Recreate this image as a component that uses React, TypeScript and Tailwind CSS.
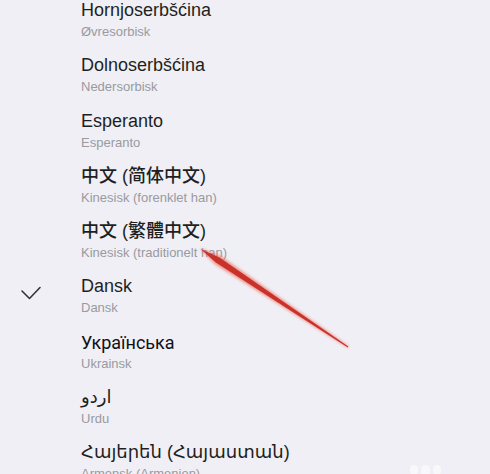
import React from "react";

const items: { title: string; sub: string; checked?: boolean; cls?: string }[] = [
  { title: "Hornjoserbšćina", sub: "Øvresorbisk" },
  { title: "Dolnoserbšćina", sub: "Nedersorbisk" },
  { title: "Esperanto", sub: "Esperanto" },
  { title: "中文 (简体中文)", sub: "Kinesisk (forenklet han)", cls: "font-medium" },
  { title: "中文 (繁體中文)", sub: "Kinesisk (traditionelt han)", cls: "font-medium" },
  { title: "Dansk", sub: "Dansk", checked: true },
  { title: "Українська", sub: "Ukrainsk", cls: "font-['Roboto'] text-[#111114]" },
  { title: "اردو", sub: "Urdu" },
  { title: "Հայերեն (Հայաստան)", sub: "Armensk (Armenien)" },
];

export default function App() {
  return (
    <div
      className="relative w-[490px] h-[474px] overflow-hidden bg-[#efeff5]"
      style={{ fontFamily: '"Liberation Sans", "Noto Sans CJK SC", "DejaVu Sans", sans-serif' }}
    >
      <div className="flex flex-col mt-[-8px]">
        {items.map((it, i) => (
          <div key={i} className="flex h-[55.25px] shrink-0 items-start pt-[6px]">
            <div className="w-[81px] shrink-0 flex justify-start pl-[20px] pt-[12px]">
              {it.checked && (
                <svg width="22" height="16" viewBox="0 0 22 16">
                  <path d="M2 5 L9.5 12.5 L20 1.5" fill="none" stroke="#333338" strokeWidth="1.6" strokeLinecap="round" strokeLinejoin="round" />
                </svg>
              )}
            </div>
            <div className="flex flex-col">
              <div className={`text-[18px] leading-[25px] text-[#1f1f22] whitespace-nowrap ${it.cls ?? ""}`}>{it.title}</div>
              <div className="text-[13px] leading-[18px] text-[#9a9aa0] whitespace-nowrap">{it.sub}</div>
            </div>
          </div>
        ))}
      </div>
      <svg className="absolute inset-0 pointer-events-none" width="490" height="474" viewBox="0 0 490 474">
        <defs>
          <filter id="b" x="-20%" y="-20%" width="140%" height="140%">
            <feGaussianBlur stdDeviation="1.6" />
          </filter>
        </defs>
        <polygon
          points="200,248.5 214.8,264 348,347.8 348.6,346.2 220.8,256.2"
          fill="#f06a5a"
          opacity="0.75"
          filter="url(#b)"
        />
        <polygon
          points="200.5,249 215.9,262.6 347.8,347.4 348.3,346.5 219.4,257.4"
          fill="#c8322a"
        />
      </svg>
      <div className="absolute left-[410px] top-[465px] flex gap-[3px] opacity-60">
        <div className="w-[8px] h-[10px] rounded-full bg-white" />
        <div className="w-[9px] h-[12px] rounded-full bg-white" />
        <div className="w-[8px] h-[10px] rounded-full bg-white" />
      </div>
    </div>
  );
}
